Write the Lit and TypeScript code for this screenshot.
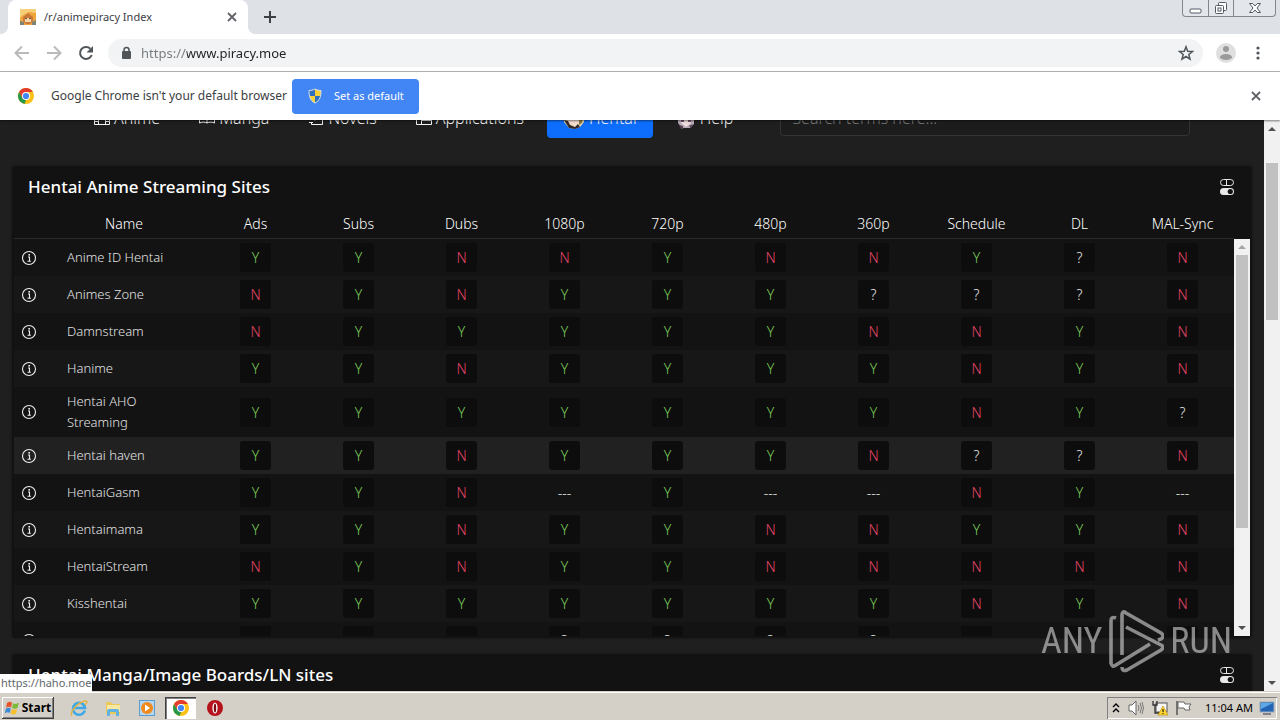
import { LitElement, html, css, svg } from "lit";
import { customElement } from "lit/decorators.js";
import { classMap } from "lit/directives/class-map.js";

type Row = { name: string; marks: string[]; active?: boolean };

const COLUMNS = ["Ads", "Subs", "Dubs", "1080p", "720p", "480p", "360p", "Schedule", "DL", "MAL-Sync"];

const row = (name: string, marks: string, active = false): Row => ({ name, marks: marks.split(""), active });

const ROWS: Row[] = [
  row("Anime ID Hentai", "YYNNYNNY?N"),
  row("Animes Zone", "NYNYYY???N"),
  row("Damnstream", "NYYYYYNNYN"),
  row("Hanime", "YYNYYYYNYN"),
  row("Hentai AHO Streaming", "YYYYYYYNY?"),
  row("Hentai haven", "YYNYYYN??N", true),
  row("HentaiGasm", "YYN-Y--NY-"),
  row("Hentaimama", "YYNYYNNYYN"),
  row("HentaiStream", "NYNYYNNNNN"),
  row("Kisshentai", "YYYYYYYNYN"),
  row("", "   ????   "),
];

const icon = (w: number, h: number, body: unknown) =>
  html`<svg width=${w} height=${h} viewBox="0 0 ${w} ${h}" aria-hidden="true">${body}</svg>`;

const closeIcon = icon(12, 12, svg`<path d="M2 2l8 8M10 2l-8 8" stroke="#5f6368" stroke-width="1.8" fill="none"/>`);

const infoIcon = icon(16, 16, svg`
  <circle cx="8" cy="8" r="6.5" fill="none" stroke="#eee" stroke-width="1.1"/>
  <path d="M7 7h1.5v4M6.5 11.2h3.4" fill="none" stroke="#eee" stroke-width="1.1"/>
  <rect x="7.4" y="4" width="1.6" height="1.6" fill="#eee"/>`);

const togglesIcon = icon(16, 18, svg`
  <rect x="1.5" y="1.5" width="13" height="6" rx="3" fill="none" stroke="#e8e8e8"/>
  <path d="M7.5 1.8v5.4" fill="none" stroke="#e8e8e8"/>
  <rect x="1" y="10" width="14" height="7" rx="3.5" fill="#e8e8e8"/>
  <circle cx="11.3" cy="13.5" r="2.6" fill="#121212"/>`);

const chromeLogo = icon(18, 18, svg`
  <circle cx="9" cy="9" r="8" fill="#fbc116"/>
  <path d="M2.1 5L5.6 11 9 13 7.6 16.9A8 8 0 0 1 2.1 5z" fill="#279847"/>
  <path d="M2.1 5A8 8 0 0 1 15.9 5H9L5.6 11z" fill="#e33b2e"/>
  <circle cx="9" cy="9" r="4" fill="#fff"/>
  <circle cx="9" cy="9" r="3.1" fill="#4285f4"/>`);

const scrollArrow = (up: boolean, fill: string) =>
  icon(8, 4, up ? svg`<path d="M0 4l4-4 4 4z" fill=${fill}/>` : svg`<path d="M0 0l4 4 4-4z" fill=${fill}/>`);

@customElement("marks-table")
class MarksTable extends LitElement {
  static styles = css`
    :host { display: flex; align-items: flex-end; padding: 0 2px; }
    .table { display: block; flex: 1; min-width: 0; color: #e2e2e2; font-size: 14px; line-height: 21px; font-weight: 300; }
    .head { display: block; border-bottom: 1px solid #292929; color: #fff; }
    .body { display: block; height: 397px; overflow: hidden; }
    .row { display: grid; grid-template-columns: 30px 160px repeat(10, minmax(0, 1fr)); align-items: center; }
    .head .row { height: 30px; }
    .body .row { padding: 4px 0; background: #131313; }
    .body .row:nth-child(even) { background: #171717; }
    .body .row.active { background: #212121; }
    .th, .td { padding: 0; text-align: center; font-weight: inherit; }
    .td.name { padding: 0 32px 0 23px; text-align: left; font-size: 13px; }
    .info { display: flex; align-items: center; justify-content: center; border: 0; padding: 0; background: none; width: 30px; height: 16px; }
    .mark { display: inline-block; vertical-align: top; width: 31px; min-height: 21px; padding: 4px 0; border-radius: 3px; background: #0d0d0d; color: #e8e8e8; }
    .yes { color: #7ccf5a; }
    .no { color: #e04464; }
    .blank { background: none; }
    .scroll { display: flex; flex-direction: column; align-items: center; justify-content: space-between; box-sizing: border-box; width: 16px; height: 397px; padding: 6px 0; background: #f1f1f1; }
    .thumb { width: 12px; height: 273px; margin: 6px 0 auto; background: #c1c1c1; }
    svg { display: block; flex: none; }
  `;

  private mark(m: string) {
    const classes = { mark: true, yes: m === "Y", no: m === "N", blank: m === "-" };
    return html`<td class="td"><span class=${classMap(classes)}>${m === "-" ? "---" : m.trim()}</span></td>`;
  }

  render() {
    return html`
      <table class="table">
        <thead class="head">
          <tr class="row">
            <td class="td"></td>
            <th class="th" scope="col">Name</th>
            ${COLUMNS.map((c) => html`<th class="th" scope="col">${c}</th>`)}
          </tr>
        </thead>
        <tbody class="body">
          ${ROWS.map((r) => html`
            <tr class=${classMap({ row: true, active: !!r.active })}>
              <td class="td"><button class="info" aria-label="Info">${infoIcon}</button></td>
              <td class="td name">${r.name}</td>
              ${r.marks.map((m) => this.mark(m))}
            </tr>`)}
        </tbody>
      </table>
      <div class="scroll">${scrollArrow(true, "#a3a3a3")}<div class="thumb"></div>${scrollArrow(false, "#505050")}</div>
    `;
  }
}

@customElement("app-root")
class AppRoot extends LitElement {
  static styles = css`
    :host { display: flex; flex-direction: column; position: relative; height: 100vh; overflow: hidden; background: #1f1f1f; font-family: "Noto Sans", sans-serif; font-size: 12px; line-height: 16px; }
    svg { display: block; flex: none; }
    button { font: inherit; border: 0; padding: 0; background: none; color: inherit; display: flex; align-items: center; justify-content: center; flex: none; }
    .tabs { display: flex; height: 34px; padding-left: 8px; background: #dee1e6; flex: none; align-items: center; }
    .tab { position: relative; display: flex; align-items: center; box-sizing: border-box; width: 240px; height: 34px; padding: 0 10px 0 12px; gap: 8px; border-radius: 8px 8px 0 0; background: #fff; color: #3c4043; font-size: 11px; }
    .tab::before, .tab::after { content: ""; position: absolute; bottom: 0; width: 8px; height: 8px; }
    .tab::before { left: -8px; background: radial-gradient(circle at 0 0, transparent 8px, #fff 8px); }
    .tab::after { right: -8px; background: radial-gradient(circle at 100% 0, transparent 8px, #fff 8px); }
    .tab-title { flex: 1; }
    .new-tab { margin-left: 14px; }
    .window { display: flex; align-self: flex-start; margin: 0 4px 0 auto; height: 17px; box-sizing: border-box; border: 1px solid #83878d; border-top: 0; border-radius: 0 0 4px 4px; background: #e3e6ea; }
    .window button { width: 25px; }
    .window button + button { border-left: 1px solid #83878d; }
    .window .shut { width: 42px; }
    .toolbar { display: flex; align-items: center; height: 37px; padding: 0 14px; border-bottom: 1px solid #b6b6b6; background: #fff; flex: none; }
    .navs { display: flex; gap: 16px; margin-right: 14px; }
    .address { display: flex; align-items: center; flex: 1; height: 28px; padding: 0 9px 0 12px; gap: 8px; border-radius: 14px; background: #f1f3f4; }
    .url { flex: 1; min-width: 0; height: 20px; border: 0; padding: 0; outline: none; font: inherit; font-size: 13px; color: transparent; background: linear-gradient(90deg, #757a7f 46px, #202124 46px); -webkit-background-clip: text; background-clip: text; }
    .profile { margin-left: 13px; }
    .more { margin-left: 14px; width: 16px; }
    .infobar { position: relative; z-index: 1; display: flex; align-items: center; height: 48px; padding: 0 18px 0 17px; background: #fff; color: #3c4043; flex: none; box-shadow: 0 1px 2px rgba(0, 0, 0, 0.5); }
    .question { margin: 0 5px 0 16px; }
    .primary { height: 35px; width: 127px; gap: 11px; border-radius: 4px; background: #4285f4; color: #fff; font-size: 11px; }
    .infobar .dismiss { margin-left: auto; }
    .view { display: flex; flex: 1; min-height: 0; }
    .page { flex: 1; min-width: 0; overflow: hidden; color: #f4f4f4; }
    .menu { display: flex; align-items: center; margin-top: -22px; padding: 0 74px 0 78px; gap: 7px; font-size: 16px; font-weight: 300; }
    .link { display: flex; align-items: center; height: 40px; padding: 0 16px; gap: 4px; border-radius: 4px; color: #f4f4f4; text-decoration: none; }
    .link.on { background: #0d6efd; }
    .search { flex: 1; min-width: 0; margin-left: 24px; height: 36px; box-sizing: border-box; padding: 0 11px; border: 1px solid #343434; border-radius: 4px; background: #1c1c1c; color: #ddd; font: inherit; }
    .search::placeholder { color: #777; }
    .cards { display: flex; flex-direction: column; gap: 16px; padding: 28px 12px; }
    .card { border-radius: 4px; background: #121212; padding-bottom: 2px; box-shadow: 0 0 3px rgba(0, 0, 0, 0.4); }
    .card-head { display: flex; align-items: center; justify-content: space-between; height: 42px; padding: 0 17px 0 16px; }
    .card-title { margin: 0; font-size: 17px; line-height: 24px; font-weight: 500; color: #fff; }
    .scroll { display: flex; flex-direction: column; align-items: center; justify-content: space-between; box-sizing: border-box; width: 16px; padding: 7px 0; background: #f1f1f1; }
    .thumb { width: 12px; height: 157px; margin: 32px 0 auto; background: #c1c1c1; }
    .status { position: absolute; left: 0; bottom: 28px; padding: 0 1px; height: 18px; background: #fff; color: #63676b; font-size: 11px; line-height: 17px; border-top-right-radius: 2px; }
    .brand { position: absolute; right: 48px; bottom: 46px; display: flex; align-items: center; gap: 6px; color: #fff; opacity: 0.5; font-family: "Roboto Condensed", "Open Sans Condensed", "Liberation Sans Narrow", "Roboto", sans-serif; font-size: 36px; line-height: 66px; font-weight: 400; pointer-events: none; }
    .taskbar { display: flex; align-items: center; height: 28px; box-sizing: border-box; border-top: 1px solid #fff; padding: 2px 3px 0 2px; background: #d4d0c8; color: #000; font-size: 11px; flex: none; outline: 1px solid #d4d0c8; position: relative; }
    .start { width: 52px; height: 22px; gap: 1px; box-shadow: inset -1px -1px #404040, inset 1px 1px #fff, inset -2px -2px #808080; font-weight: 700; font-size: 12px; }
    .apps { display: flex; gap: 3px; margin-left: 9px; }
    .app { width: 31px; height: 22px; }
    .app.current { background: #fff; box-shadow: inset 1px 1px #404040, inset 2px 2px #808080, inset -1px -1px #fff; }
    .tray { display: flex; align-items: center; gap: 6px; margin-left: auto; height: 22px; padding: 0 2px 0 4px; box-shadow: inset 1px 1px #808080, inset -1px -1px #fff; }
    .clock { margin: 0 0 0 6px; }
  `;

  private link(label: string, glyph: unknown, on = false) {
    return html`<a class=${classMap({ link: true, on })} href="#">${glyph}<span>${label}</span></a>`;
  }

  render() {
    return html`
      <header class="tabs">
        <div class="tab">
          ${icon(16, 16, svg`<rect width="16" height="16" fill="#eea63c"/><path d="M0 0h16v4L9 3 3 6 0 9z" fill="#f6cf78"/><path d="M3 8l5-4 5 4v4l-3 3H6l-3-3z" fill="#c97a3a"/><path d="M5 9h6v4H5z" fill="#f7d9b0"/><path d="M5 9l2 1M11 9l-2 1" stroke="#5c3820"/><path d="M0 12l4 1v3H0zM12 13l4-2v5h-4z" fill="#7e8577"/>`)}
          <span class="tab-title">/r/animepiracy Index</span>
          <button aria-label="Close tab">${closeIcon}</button>
        </div>
        <button class="new-tab" aria-label="New tab">${icon(16, 16, svg`<path d="M8 2v12M2 8h12" stroke="#3c4043" stroke-width="2"/>`)}</button>
        <div class="window">
          <button aria-label="Minimize">${icon(13, 14, svg`<rect x="1" y="8" width="11" height="4" rx="1" fill="#fff" stroke="#555a66"/>`)}</button>
          <button aria-label="Restore">${icon(14, 14, svg`<rect x="4.5" y="1.5" width="8" height="8" rx="1" fill="#fff" stroke="#555a66"/><rect x="1.5" y="4.5" width="8" height="8" rx="1" fill="#fff" stroke="#555a66"/><rect x="4" y="7" width="3" height="3" fill="#fff" stroke="#555a66"/>`)}</button>
          <button class="shut" aria-label="Close">${icon(14, 14, svg`<path d="M1.5 2.5h3.2L7 5l2.3-2.5h3.2L9 7l3.5 4.5H9.3L7 9l-2.3 2.5H1.5L5 7z" fill="#fff" stroke="#555a66"/>`)}</button>
        </div>
      </header>
      <nav class="toolbar">
        <div class="navs">
          <button aria-label="Back">${icon(16, 16, svg`<path d="M15 8H2M8 1.5L1.5 8 8 14.5" fill="none" stroke="#bababa" stroke-width="2"/>`)}</button>
          <button aria-label="Forward">${icon(16, 16, svg`<path d="M1 8h13M8 1.5L14.5 8 8 14.5" fill="none" stroke="#bababa" stroke-width="2"/>`)}</button>
          <button aria-label="Reload">${icon(16, 16, svg`<path d="M13.7 10A6 6 0 1 1 12.3 3.7" fill="none" stroke="#50555a" stroke-width="2"/><path d="M15 1v6.5H8.5z" fill="#50555a"/>`)}</button>
        </div>
        <div class="address">
          ${icon(13, 16, svg`<rect x="2" y="6" width="9" height="8" rx="1" fill="#50555a"/><path d="M4 6.5V5a2.5 2.5 0 0 1 5 0v1.5" fill="none" stroke="#50555a" stroke-width="1.5"/>`)}
          <input class="url" type="text" aria-label="Address" value="https://www.piracy.moe" />
          <button aria-label="Bookmark">${icon(16, 16, svg`<path d="M8 1.8l1.7 4.4 4.7.3-3.6 3 1.2 4.6L8 11.5l-4 2.6 1.2-4.6-3.6-3 4.7-.3z" fill="none" stroke="#50555a" stroke-width="1.5"/>`)}</button>
        </div>
        <button class="profile" aria-label="Profile">${icon(20, 20, svg`<circle cx="10" cy="10" r="10" fill="#dfdfdf"/><circle cx="10" cy="6" r="3" fill="#9a9a9a"/><ellipse cx="10" cy="14" rx="6" ry="3" fill="#9a9a9a"/>`)}</button>
        <button class="more" aria-label="Menu">${icon(4, 14, svg`<circle cx="2" cy="2" r="1.6" fill="#50555a"/><circle cx="2" cy="7" r="1.6" fill="#50555a"/><circle cx="2" cy="12" r="1.6" fill="#50555a"/>`)}</button>
      </nav>
      <div class="infobar">
        ${chromeLogo}
        <span class="question">Google Chrome isn't your default browser</span>
        <button class="primary">
          ${icon(16, 16, svg`<path d="M8 1c2 1 4 1.5 6 1.5 0 6-1 10-6 12.5C3 12.5 2 8.5 2 2.5 4 2.5 6 2 8 1z" fill="#f7d038"/><path d="M8 1v7H2.4C2 6.5 2 4.5 2 2.5 4 2.5 6 2 8 1zM8 8h5.6c-.6 3.3-2.1 5.6-5.6 7z" fill="#2f6fc0"/><path d="M8 1c2 1 4 1.5 6 1.5 0 6-1 10-6 12.5C3 12.5 2 8.5 2 2.5 4 2.5 6 2 8 1z" fill="none" stroke="#d9e2ea"/>`)}
          <span>Set as default</span>
        </button>
        <button class="dismiss" aria-label="Dismiss">${closeIcon}</button>
      </div>
      <div class="view">
        <main class="page">
          <nav class="menu">
            ${this.link("Anime", icon(16, 16, svg`<path d="M.5 1.5h15v13H.5zM4.5 1.5v13M11.5 1.5v13M.5 8h15M.5 11.5h4M11.5 11.5h4" fill="none" stroke="#f4f4f4"/>`))}
            ${this.link("Manga", icon(16, 16, svg`<path d="M8 3v10C6 11.8 3 11.8.5 13V3C3 2 6 2 8 3c2-1 5-1 7.5 0v10c-2.5-1.2-5.5-1.2-7.5 0" fill="none" stroke="#f4f4f4"/>`))}
            ${this.link("Novels", icon(16, 16, svg`<path d="M3.5 9V1.5h11v13h-11V12M1 9.5h4M1 12.5h4M6 7.5h5M7 10.5l2-2" fill="none" stroke="#f4f4f4"/>`))}
            ${this.link("Applications", icon(16, 16, svg`<path d="M.5 1.5h15v13H.5zM5.5 1.5v13M5.5 10.5h10" fill="none" stroke="#f4f4f4"/>`))}
            ${this.link("Hentai", icon(22, 22, svg`<path d="M1 2h20v13l-4 5-5 2-6-1-5-6z" fill="#ead6a6"/><path d="M5 8h12v8l-5 4-7-5z" fill="#f3ddd0"/><path d="M1 13l4 1 2 4 5 2 3-3 2 3-5 2-6-1z" fill="#33282c"/><path d="M16 12l4-1-1 5-3 2z" fill="#8d7a45"/>`), true)}
            ${this.link("Help", icon(20, 22, svg`<path d="M2 3h16v14l-4 4H6l-4-5z" fill="#b9aaba"/><path d="M5 8h10v8l-5 4-5-4z" fill="#f0dcdc"/><path d="M5 14h3M12 14h3" stroke="#74506a" stroke-width="2"/><path d="M3 18l4 1v3H5zM13 19l4-2-2 4z" fill="#57434f"/>`))}
            <input class="search" type="search" aria-label="Search" placeholder="Search terms here..." />
          </nav>
          <div class="cards">
            <section class="card">
              <div class="card-head"><h2 class="card-title">Hentai Anime Streaming Sites</h2><button aria-label="Toggle columns">${togglesIcon}</button></div>
              <marks-table></marks-table>
            </section>
            <section class="card">
              <div class="card-head"><h2 class="card-title">Hentai Manga/Image Boards/LN sites</h2><button aria-label="Toggle columns">${togglesIcon}</button></div>
            </section>
          </div>
        </main>
        <div class="scroll">${scrollArrow(true, "#505050")}<div class="thumb"></div>${scrollArrow(false, "#505050")}</div>
      </div>
      <footer class="taskbar">
        <button class="start">
          ${icon(16, 16, svg`<path d="M2 3c2-1.5 3.5-1.5 5-.3L6 7.5C4.5 6.5 3 6.5 1 7.8z" fill="#e8542a"/><path d="M8 3.2c2 1 3.5 1 6-.4L12.5 8C10.5 9 9 9 7 8z" fill="#7db93b"/><path d="M.8 8.8c2-1.3 3.5-1.3 5-.3l-1 4.5c-1.5-1-3-1-5 .3z" fill="#3d8ad8"/><path d="M6.7 9c2 1 3.5 1 5.5 0L11 13.8c-2 1-3.5 1-5.3 0z" fill="#f6c02d"/>`)}
          <span>Start</span>
        </button>
        <div class="apps">
          <button class="app" aria-label="Internet Explorer">${icon(18, 18, svg`<path d="M14.8 11.5A6 6 0 1 1 15 9H5" fill="none" stroke="#3fa9e8" stroke-width="2.6"/><path d="M2 16.5C-1 13 9 2 16 2c2 .5 0 3-1 4" fill="none" stroke="#e3b43c" stroke-width="1.4"/>`)}</button>
          <button class="app" aria-label="Explorer">${icon(18, 18, svg`<path d="M2 3h5l1 2h8v10H2z" fill="#e9c95a"/><path d="M3 6h13v7H3z" fill="#f8e8a2"/><path d="M3 17v-5q0-2 2-2h8q2 0 2 2v5h-3v-4H6v4z" fill="#63b3e2"/>`)}</button>
          <button class="app" aria-label="Media Player">${icon(18, 18, svg`<rect x="1.5" y="1.5" width="15" height="15" fill="#b7d7ef" stroke="#5a9bd0"/><circle cx="9" cy="9" r="6" fill="#f08a1d"/><path d="M7 5.5l5 3.5-5 3.5z" fill="#fff"/>`)}</button>
          <button class="app current" aria-label="Chrome">${chromeLogo}</button>
          <button class="app" aria-label="Opera">${icon(18, 18, svg`<circle cx="9" cy="9" r="8" fill="#b5121b"/><ellipse cx="9" cy="9" rx="2.6" ry="5.5" fill="#fff"/><ellipse cx="9" cy="9" rx="1.2" ry="4.5" fill="#7a0a10"/>`)}</button>
        </div>
        <div class="tray">
          ${icon(10, 12, svg`<path d="M2 5l3-3 3 3M2 10l3-3 3 3" fill="none" stroke="#000" stroke-width="1.4"/>`)}
          ${icon(18, 16, svg`<path d="M2 5h3l4-4v14l-4-4H2z" fill="#fff" stroke="#666"/><path d="M11 5q2 3 0 6M13 3q3 5 0 10M15 2q3 6 0 12" fill="none" stroke="#777"/>`)}
          ${icon(18, 16, svg`<rect x="5" y="3" width="11" height="9" fill="#f5f5f5" stroke="#555"/><path d="M2 1v4h4V1M4 5v8h5" fill="none" stroke="#333" stroke-width="1.3"/><path d="M12 6l5 9H7z" fill="#ffd633" stroke="#b58b00" stroke-width=".6"/><path d="M12 9v3M12 13v1" stroke="#000"/>`)}
          ${icon(18, 16, svg`<path d="M2 1v14" stroke="#555" stroke-width="1.5"/><path d="M3 2h6l1 2h6l-2 3 1 3h-5l-1-2H3z" fill="#fff" stroke="#666"/>`)}
          <span class="clock">11:04 AM</span>
          ${icon(16, 16, svg`<rect x="1" y="2" width="14" height="10" fill="#2464b4" stroke="#9ab"/><path d="M2 3h12L2 9z" fill="#5fa8e6"/><path d="M4 14h8" stroke="#667" stroke-width="1.5"/>`)}
        </div>
      </footer>
      <div class="status">https://haho.moe</div>
      <div class="brand">
        <span>ANY</span>
        ${icon(56, 64, svg`<path d="M8 9Q3 7 3 12V54Q4 59 8 56L42 35M14 46V6Q14 1 18 4L53 24Q57 27 53 30L50 31M18 18L53 36Q57 38 53 41L19 61Q14 63 14 58" fill="none" stroke="#fff" stroke-width="3.6"/>`)}
        <span>RUN</span>
      </div>
    `;
  }
}
